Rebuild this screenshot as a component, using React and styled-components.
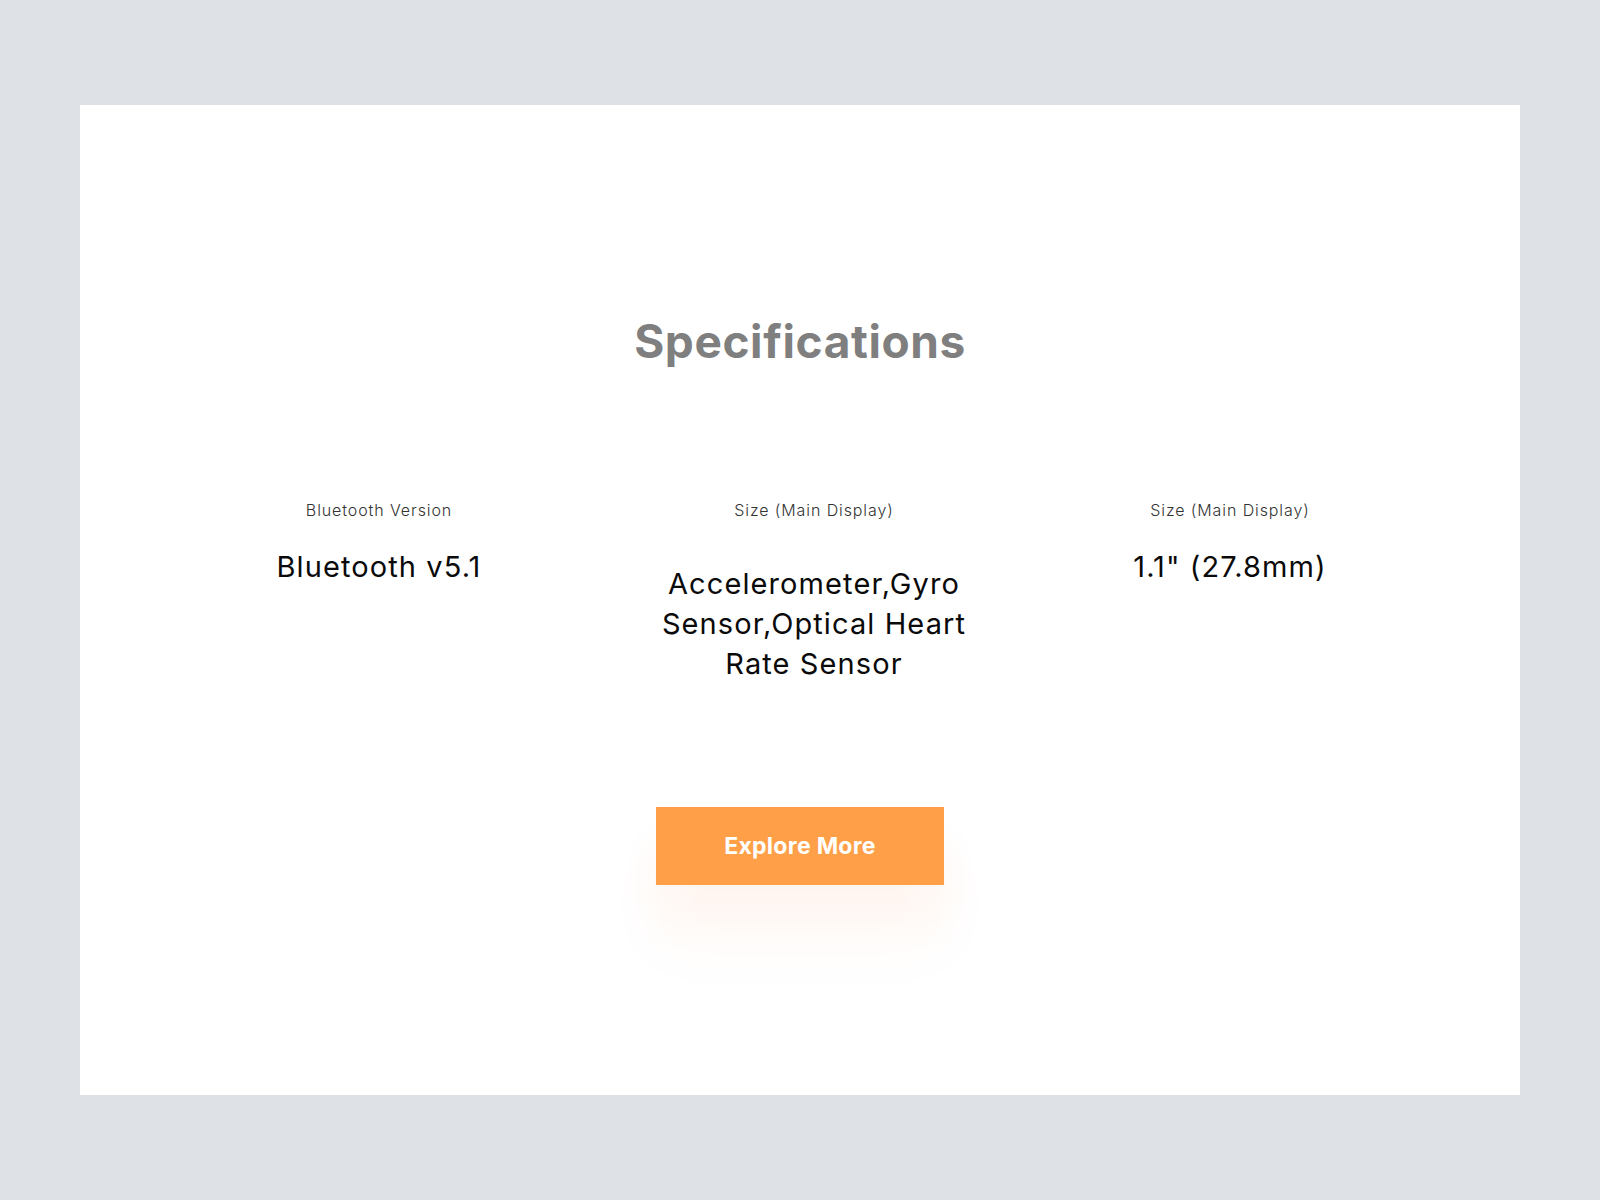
import styled, { createGlobalStyle } from "styled-components";

const GlobalStyle = createGlobalStyle`
  body {
    margin: 0;
    background-color: #dee1e6;
    font-family: Inter, "Noto Sans", sans-serif;
  }
`;

const specs = [
  { label: "Bluetooth Version", value: "Bluetooth v5.1", offset: 0, width: 426 },
  {
    label: "Size (Main Display)",
    value: "Accelerometer,Gyro Sensor,Optical Heart Rate Sensor",
    offset: 17,
    width: 444,
  },
  { label: "Size (Main Display)", value: "1.1\" (27.8mm)", offset: 0, width: 388 },
];

const App = () => {
  return (
    <Page>
      <GlobalStyle />
      <Card>
        <Title>Specifications</Title>
        <SpecRow>
          {specs.map((spec, i) => (
            <SpecColumn key={i} width={spec.width}>
              <SpecLabel>{spec.label}</SpecLabel>
              <SpecValue offset={spec.offset}>{spec.value}</SpecValue>
            </SpecColumn>
          ))}
        </SpecRow>
        <ExploreButton>Explore More</ExploreButton>
      </Card>
    </Page>
  );
};

const Page = styled.div`
  padding: 105px 80px;
  min-height: 1200px;
  box-sizing: border-box;
`;

const Card = styled.div`
  width: 1440px;
  height: 990px;
  background-color: #ffffff;
  box-sizing: border-box;
  padding-top: 209px;
  display: flex;
  flex-direction: column;
  align-items: center;
`;

const Title = styled.h1`
  margin: 0;
  font-size: 46px;
  line-height: 55px;
  font-weight: 700;
  letter-spacing: 0.6px;
  color: #7f7f7f;
`;

const SpecRow = styled.div`
  align-self: flex-start;
  margin-left: 86px;
  margin-top: 131px;
  display: flex;
`;

const SpecColumn = styled.div`
  width: ${(props) => props.width}px;
  display: flex;
  flex-direction: column;
  align-items: center;
  text-align: center;
`;

const SpecLabel = styled.div`
  font-size: 16px;
  line-height: 20px;
  font-weight: 300;
  letter-spacing: 0.9px;
  color: #333333;
`;

const SpecValue = styled.div`
  margin-top: ${(props) => 27 + props.offset}px;
  max-width: 350px;
  font-size: 29px;
  line-height: 40px;
  font-weight: 400;
  letter-spacing: 1.1px;
  color: #0a0a0a;
`;

const ExploreButton = styled.button`
  margin-top: 123px;
  width: 288px;
  height: 78px;
  border: none;
  background-color: #ff9f48;
  color: #ffffff;
  font-family: Inter, sans-serif;
  font-size: 23px;
  font-weight: 700;
  letter-spacing: 0.3px;
  cursor: pointer;
  box-shadow: 0 35px 40px rgba(255, 140, 60, 0.06),
    0 60px 70px rgba(255, 140, 60, 0.03);
`;

export default App;
